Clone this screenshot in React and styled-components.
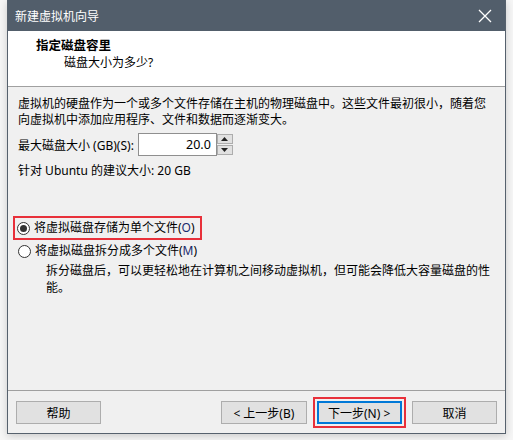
import React from "react";
import styled, { createGlobalStyle } from "styled-components";

const Global = createGlobalStyle`
  html, body { margin: 0; padding: 0; background: #f6f6f6; }
  body { font-family: "Noto Sans", "Noto Sans CJK SC", sans-serif; font-size: 12px; color: #000; }
`;

const Page = styled.div`
  padding-left: 7px;
  width: 513px;
  height: 440px;
  box-sizing: border-box;
`;

const Window = styled.div`
  width: 499px;
  height: 434px;
  box-sizing: border-box;
  border: 1px solid #56616d;
  border-top: none;
  background: #f0f0f0;
  display: flex;
  flex-direction: column;
  box-shadow: 0 2px 8px rgba(0, 0, 0, 0.18);
`;

const TitleBar = styled.div`
  height: 31px;
  flex: none;
  background: #525e6b;
  color: #fff;
  display: flex;
  align-items: center;
  justify-content: space-between;
  padding: 0 8px 0 7px;
  font-size: 12px;
`;

const CloseBtn = styled.div`
  width: 14px;
  height: 14px;
  margin-right: 5px;
  display: flex;
`;

const Header = styled.div`
  height: 56px;
  flex: none;
  background: #fff;
  border-bottom: 1px solid #a0a0a0;
  display: flex;
  flex-direction: column;
  padding: 7px 0 0 28px;
  box-sizing: border-box;
`;

const HeaderTitle = styled.div`
  font-weight: bold;
  font-size: 12.5px;
  line-height: 16px;
`;

const HeaderSub = styled.div`
  padding-left: 28px;
  line-height: 17px;
`;

const Body = styled.div`
  flex: 1;
  display: flex;
  flex-direction: column;
  padding: 9px 10px 0 10px;
`;

const Para = styled.div`
  line-height: 16px;
`;

const SizeRow = styled.div`
  margin-top: 5px;
  display: flex;
  align-items: center;
  gap: 4px;
  height: 23px;
`;

const Spin = styled.div`
  display: flex;
  height: 23px;
`;

const NumBox = styled.div`
  width: 79px;
  height: 23px;
  box-sizing: border-box;
  border: 1px solid #8f8f8f;
  background: #fff;
  text-align: right;
  padding-right: 5px;
  line-height: 21px;
  font-size: 12.5px;
`;

const SpinButtons = styled.div`
  width: 16px;
  height: 23px;
  box-sizing: border-box;
  display: flex;
  flex-direction: column;
  padding: 1px 0;
  gap: 1px;
`;

const SpinBtn = styled.div`
  flex: 1;
  background: #e1e1e1;
  border: 1px solid #adadad;
  display: flex;
  align-items: center;
  justify-content: center;
`;

const Hint = styled.div`
  margin-top: 7px;
  line-height: 16px;
`;

const Options = styled.div`
  margin-top: 37px;
  display: flex;
  flex-direction: column;
  align-items: flex-start;
`;

const Highlight = styled.div`
  margin-left: -5px;
  border: 2px solid #e8303a;
  padding: 1px 5px 1px 2px;
  height: 24px;
  box-sizing: border-box;
  display: flex;
  align-items: center;
`;

const RadioRow = styled.label`
  display: flex;
  align-items: center;
  gap: 4px;
  height: 18px;
  line-height: 18px;
`;

const PlainRow = styled.div`
  margin-top: 1px;
  display: flex;
  align-items: center;
  height: 20px;
`;

const Radio = styled.span`
  width: 11px;
  height: 11px;
  border-radius: 50%;
  border: 1px solid #333;
  background: #fff;
  display: inline-flex;
  align-items: center;
  justify-content: center;
  flex: none;
  &::after {
    content: "";
    display: ${(p) => (p.$checked ? "block" : "none")};
    width: 7px;
    height: 7px;
    border-radius: 50%;
    background: #333;
  }
`;

const Key = styled.span`
  color: #1a2a6c;
`;

const Desc = styled.div`
  margin-left: 28px;
  margin-top: 1px;
  line-height: 17px;
`;

const Footer = styled.div`
  flex: none;
  border-top: 1px solid #a0a0a0;
  padding: 10px 8px 9px 8px;
  display: flex;
  align-items: center;
`;

const Button = styled.div`
  width: 86px;
  height: 23px;
  box-sizing: border-box;
  background: #e1e1e1;
  border: ${(p) => (p.$default ? "2px solid #0078d7" : "1px solid #adadad")};
  display: flex;
  align-items: center;
  justify-content: center;
  font-size: 12px;
  margin-left: ${(p) => p.$ml || "0"};
  outline: ${(p) => (p.$marked ? "2px solid #e8303a" : "none")};
  outline-offset: 2px;
`;

const Arrow = ({ up }) => (
  <svg width="7" height="4" viewBox="0 0 7 4">
    <path d={up ? "M0 4 L3.5 0 L7 4 Z" : "M0 0 L3.5 4 L7 0 Z"} fill="#222" />
  </svg>
);

export default function App() {
  return (
    <Page>
      <Global />
      <Window>
        <TitleBar>
          <span>新建虚拟机向导</span>
          <CloseBtn>
            <svg width="14" height="14" viewBox="0 0 14 14">
              <path d="M1 1 L13 13 M13 1 L1 13" stroke="#fff" strokeWidth="1.3" />
            </svg>
          </CloseBtn>
        </TitleBar>
        <Header>
          <HeaderTitle>指定磁盘容里</HeaderTitle>
          <HeaderSub>磁盘大小为多少?</HeaderSub>
        </Header>
        <Body>
          <Para>
            虚拟机的硬盘作为一个或多个文件存储在主机的物理磁盘中。这些文件最初很小，随着您
            <br />
            向虚拟机中添加应用程序、文件和数据而逐渐变大。
          </Para>
          <SizeRow>
            <span>最大磁盘大小 (GB)(S):</span>
            <Spin>
              <NumBox>20.0</NumBox>
              <SpinButtons>
                <SpinBtn>
                  <Arrow up />
                </SpinBtn>
                <SpinBtn>
                  <Arrow />
                </SpinBtn>
              </SpinButtons>
            </Spin>
          </SizeRow>
          <Hint>针对 Ubuntu 的建议大小: 20 GB</Hint>
          <Options>
            <Highlight>
              <RadioRow>
                <Radio $checked />
                <span>
                  将虚拟磁盘存储为单个文件(<Key>O</Key>)
                </span>
              </RadioRow>
            </Highlight>
            <PlainRow>
              <RadioRow>
                <Radio />
                <span>
                  将虚拟磁盘拆分成多个文件(<Key>M</Key>)
                </span>
              </RadioRow>
            </PlainRow>
            <Desc>
              拆分磁盘后，可以更轻松地在计算机之间移动虚拟机，但可能会降低大容量磁盘的性
              <br />
              能。
            </Desc>
          </Options>
        </Body>
        <Footer>
          <Button>帮助</Button>
          <Button $ml="120px">&lt; 上一步(B)</Button>
          <Button $ml="10px" $default $marked>
            下一步(N) &gt;
          </Button>
          <Button $ml="10px">取消</Button>
        </Footer>
      </Window>
    </Page>
  );
}
